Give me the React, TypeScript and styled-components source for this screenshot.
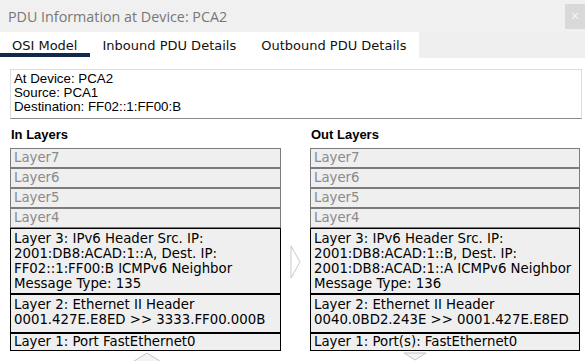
import styled, { createGlobalStyle } from "styled-components";

const GlobalStyle = createGlobalStyle`
  html, body {
    margin: 0;
    padding: 0;
    background: #ffffff;
  }
`;

const Window = styled.div`
  width: 585px;
  height: 361px;
  overflow: hidden;
  background: #ffffff;
  display: flex;
  flex-direction: column;
`;

const TitleBar = styled.div`
  height: 32px;
  flex: none;
  background: #f0f0f0;
  display: flex;
  align-items: center;
  justify-content: space-between;
`;

const Title = styled.div`
  padding-left: 8px;
  font-family: "Open Sans", "Liberation Sans", sans-serif;
  font-size: 14.3px;
  color: #777777;
`;

const CloseButton = styled.div`
  width: 20px;
  height: 25px;
  margin-top: 1px;
  background: #d9d9d9;
  color: #f4f4f4;
  font-family: "DejaVu Sans", sans-serif;
  font-size: 11px;
  display: flex;
  align-items: center;
  justify-content: center;
`;

const TabStrip = styled.div`
  height: 26px;
  flex: none;
  background: #efefef;
  display: flex;
`;

const Tabs = styled.div`
  display: flex;
  background: #ffffff;
`;

const Tab = styled.div<{ $active?: boolean }>`
  height: 16px;
  padding: 5px 13px 0 12px;
  font-family: "DejaVu Sans", Verdana, sans-serif;
  font-size: 13px;
  color: #111111;
  display: flex;
  align-items: center;
  border-bottom: 4px solid ${(p) => (p.$active ? "#14284a" : "transparent")};
  margin-bottom: 1px;
`;

const Content = styled.div`
  padding: 11px 6px 0 10px;
`;

const InfoBox = styled.div`
  width: 564px;
  height: 44px;
  padding: 2px 3px;
  border: 1px solid #dddddd;
  border-bottom-color: #8a8a8a;
  font-family: "Liberation Sans", Arial, sans-serif;
  font-size: 13.3px;
  line-height: 14px;
  color: #000000;
`;

const Columns = styled.div`
  display: grid;
  grid-template-columns: 271px 29px 270px;
  grid-template-rows: 29px auto;
`;

const Heading = styled.div`
  padding-top: 8px;
  padding-left: 1px;
  font-family: "Liberation Sans", Arial, sans-serif;
  font-weight: bold;
  font-size: 13px;
  color: #000000;
`;

const Stack = styled.div`
  display: flex;
  flex-direction: column;
`;

const LayerBox = styled.div<{ $active?: boolean; $pad?: string }>`
  border: 1px solid ${(p) => (p.$active ? "#000000" : "#7c7c7c")};
  background: #efefef;
  color: ${(p) => (p.$active ? "#000000" : "#8a8a8a")};
  font-family: "DejaVu Sans", Verdana, sans-serif;
  font-size: 13.3px;
  line-height: ${(p) => (p.$active ? "15px" : "18px")};
  padding: ${(p) => p.$pad ?? "0 3px"};
  white-space: pre-line;
`;

const Middle = styled.div`
  padding: 97px 0 0 9px;
`;

const ArrowRow = styled.div<{ $offset: number }>`
  display: flex;
  padding-left: ${(p) => p.$offset}px;
  padding-top: 1px;
  height: 12px;
`;

type Layer = { text: string; pad: string };

const inLayers: Layer[] = [
  {
    text: "Layer 3: IPv6 Header Src. IP:\n2001:DB8:ACAD:1::A, Dest. IP:\nFF02::1:FF00:B ICMPv6 Neighbor\nMessage Type: 135",
    pad: "2px 3px",
  },
  { text: "Layer 2: Ethernet II Header\n0001.427E.E8ED >> 3333.FF00.000B", pad: "2px 3px 5px" },
  { text: "Layer 1: Port FastEthernet0", pad: "0 3px 1px" },
];

const outLayers: Layer[] = [
  {
    text: "Layer 3: IPv6 Header Src. IP:\n2001:DB8:ACAD:1::B, Dest. IP:\n2001:DB8:ACAD:1::A ICMPv6 Neighbor\nMessage Type: 136",
    pad: "2px 3px",
  },
  { text: "Layer 2: Ethernet II Header\n0040.0BD2.243E >> 0001.427E.E8ED", pad: "2px 3px 5px" },
  { text: "Layer 1: Port(s): FastEthernet0", pad: "0 3px 1px" },
];

function Layers({ items }: { items: Layer[] }) {
  return (
    <Stack>
      {["Layer7", "Layer6", "Layer5", "Layer4"].map((l) => (
        <LayerBox key={l}>{l}</LayerBox>
      ))}
      {items.map((l) => (
        <LayerBox key={l.text} $active $pad={l.pad}>
          {l.text}
        </LayerBox>
      ))}
    </Stack>
  );
}

export default function App() {
  return (
    <>
      <GlobalStyle />
      <Window>
        <TitleBar>
          <Title>PDU Information at Device: PCA2</Title>
          <CloseButton>✕</CloseButton>
        </TitleBar>
        <TabStrip>
          <Tabs>
            <Tab $active>OSI Model</Tab>
            <Tab>Inbound PDU Details</Tab>
            <Tab>Outbound PDU Details</Tab>
          </Tabs>
        </TabStrip>
        <Content>
          <InfoBox>
            At Device: PCA2
            <br />
            Source: PCA1
            <br />
            Destination: FF02::1:FF00:B
          </InfoBox>
          <Columns>
            <Heading>In Layers</Heading>
            <div />
            <Heading>Out Layers</Heading>
            <div>
              <Layers items={inLayers} />
              <ArrowRow $offset={120}>
                <svg width="34" height="12" viewBox="0 0 34 12">
                  <polygon points="1,11 17,1 33,11" fill="#f4f4f4" stroke="#c4c4c4" />
                </svg>
              </ArrowRow>
            </div>
            <Middle>
              <svg width="11" height="34" viewBox="0 0 11 34">
                <polygon points="1,1 10,17 1,33" fill="#ffffff" stroke="#c8c8c8" />
              </svg>
            </Middle>
            <div>
              <Layers items={outLayers} />
              <ArrowRow $offset={93}>
                <svg width="24" height="9" viewBox="0 0 24 9">
                  <polygon points="1,1 12,8 23,1" fill="#f4f4f4" stroke="#c4c4c4" />
                </svg>
              </ArrowRow>
            </div>
          </Columns>
        </Content>
      </Window>
    </>
  );
}
